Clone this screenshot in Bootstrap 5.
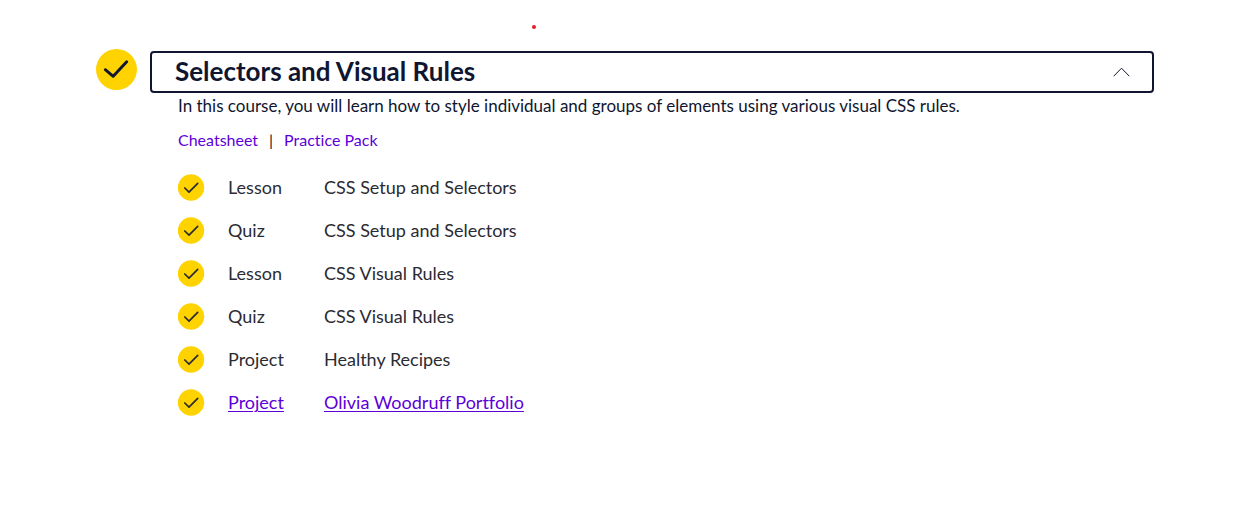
<!DOCTYPE html>
<html lang="en">
<head>
<meta charset="utf-8">
<meta name="viewport" content="width=device-width, initial-scale=1">
<title>Selectors and Visual Rules</title>
<link href="https://cdn.jsdelivr.net/npm/bootstrap@5.3.0/dist/css/bootstrap.min.css" rel="stylesheet">
<style>
  :root { --navy: #10162f; --violet: #5c00d9; --gold: #ffd300; }
  body { font-family: Lato, sans-serif; font-size: 18px; line-height: 24px; color: var(--navy); background: #fff; font-variant-ligatures: none; }
  .syllabus { padding: 25px 82px 24px 96px; }
  .marker { width: 4px; height: 4px; background: #ea1c24; margin-left: 41.2%; }
  .module-head { gap: 13px; margin-top: 20px; }
  .module-check { width: 41px; height: 41px; }
  .module-toggle { height: 42px; margin-top: 2px; padding: 0 22px 3px 23px; border: 2px solid var(--navy); border-radius: 4px; background: #fff; color: var(--navy); font-size: 26px; line-height: 32px; }
  .module-toggle svg { margin-top: 2px; }
  .module-body { margin-left: 82px; }
  .summary { font-size: 17px; padding-top: 1px; }
  .resources { font-size: 16px; margin-top: 10px; gap: 11px; }
  a { color: var(--violet); }
  .items { margin-top: 22px; gap: 16px; }
  .items svg { width: 27px; height: 27px; margin-right: 23px; }
  .items li { color: #2b2b33; line-height: 27px; }
  .kind { width: 96px; }
  .items a { text-underline-offset: 2px; text-decoration-thickness: 1px; }
</style>
</head>
<body>
<svg class="d-none" aria-hidden="true">
  <symbol id="done" viewBox="0 0 27 27">
    <circle cx="13" cy="13.5" r="13.2" fill="#ffd300"/>
    <path d="M6.800 14l4.200 4.100 8.700-8.800" fill="none" stroke="#2b2b33" stroke-width="1.7" stroke-linecap="round" stroke-linejoin="round"/>
  </symbol>
</svg>
<main class="syllabus">
  <div class="marker rounded-circle"></div>
  <div class="module-head d-flex align-items-start">
    <svg class="module-check flex-shrink-0" viewBox="0 0 41 41" role="img" aria-label="Completed">
      <circle cx="20.5" cy="20.5" r="20.5" fill="#ffd300"/>
      <path d="M9.300 20.700l7.900 6.600L30.700 12.800" fill="none" stroke="#10162f" stroke-width="2.9" stroke-linecap="round" stroke-linejoin="round"/>
    </svg>
    <button class="module-toggle flex-grow-1 d-flex align-items-center justify-content-between fw-bold text-start" type="button" data-bs-toggle="collapse" data-bs-target="#module" aria-expanded="true" aria-controls="module">
      <span>Selectors and Visual Rules</span>
      <svg width="17" height="10" viewBox="0 0 17 10" fill="none" stroke="#10162f" stroke-width="1" aria-hidden="true"><path d="M.7 9.200l7.800-8 7.800 8"/></svg>
    </button>
  </div>
  <div class="collapse show" id="module">
    <div class="module-body">
      <p class="summary mb-0">In this course, you will learn how to style individual and groups of elements using various visual CSS rules.</p>
      <div class="resources d-flex">
        <a class="text-decoration-none" href="#cheatsheet">Cheatsheet</a>
        <span>|</span>
        <a class="text-decoration-none" href="#practice">Practice Pack</a>
      </div>
      <ul class="items list-unstyled d-flex flex-column mb-0">
        <li class="d-flex"><svg role="img" aria-label="Completed"><use href="#done"/></svg><span class="kind">Lesson</span><span>CSS Setup and Selectors</span></li>
        <li class="d-flex"><svg role="img" aria-label="Completed"><use href="#done"/></svg><span class="kind">Quiz</span><span>CSS Setup and Selectors</span></li>
        <li class="d-flex"><svg role="img" aria-label="Completed"><use href="#done"/></svg><span class="kind">Lesson</span><span>CSS Visual Rules</span></li>
        <li class="d-flex"><svg role="img" aria-label="Completed"><use href="#done"/></svg><span class="kind">Quiz</span><span>CSS Visual Rules</span></li>
        <li class="d-flex"><svg role="img" aria-label="Completed"><use href="#done"/></svg><span class="kind">Project</span><span>Healthy Recipes</span></li>
        <li class="d-flex"><svg role="img" aria-label="Completed"><use href="#done"/></svg><span class="kind"><a href="#portfolio">Project</a></span><a href="#portfolio">Olivia Woodruff Portfolio</a></li>
      </ul>
    </div>
  </div>
</main>
<script src="https://cdn.jsdelivr.net/npm/bootstrap@5.3.0/dist/js/bootstrap.bundle.min.js"></script>
</body>
</html>
